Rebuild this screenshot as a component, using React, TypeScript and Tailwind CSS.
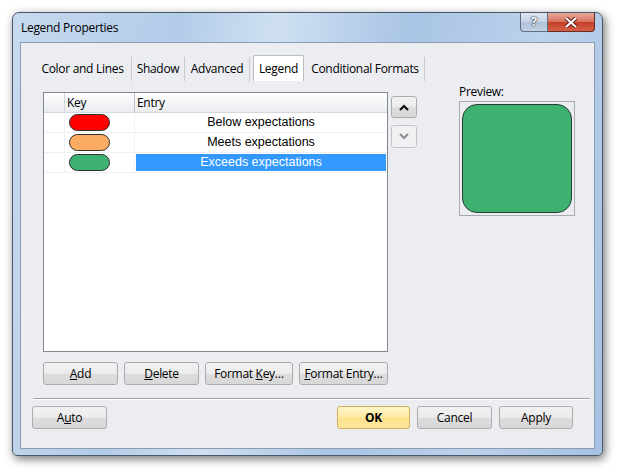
import React from "react";

type Row = {
  color: string;
  label: string;
  selected?: boolean;
};

const rows: Row[] = [
  { color: "bg-[#ff0000]", label: "Below expectations" },
  { color: "bg-[#fcab62]", label: "Meets expectations" },
  { color: "bg-[#3cb170]", label: "Exceeds expectations", selected: true },
];

function Btn({
  children,
  className = "",
  primary = false,
}: {
  children: React.ReactNode;
  className?: string;
  primary?: boolean;
}) {
  return (
    <button
      className={
        "h-[23px] rounded-[3px] border text-[12px] text-black flex items-center justify-center " +
        (primary
          ? "border-[#d2ad5a] bg-[linear-gradient(#fff6c9,#ffeaa0_50%,#fde08a_51%,#fde59c)] font-bold "
          : "border-[#a9adb2] bg-[linear-gradient(#f2f2f2,#ebebeb_50%,#dddddd_51%,#d8d8d8)] ") +
        className
      }
    >
      {children}
    </button>
  );
}

function Chevron({ up, color }: { up: boolean; color: string }) {
  return (
    <svg width="10" height="7" viewBox="0 0 10 7">
      <path
        d={up ? "M1 6 L5 2 L9 6" : "M1 1 L5 5 L9 1"}
        fill="none"
        stroke={color}
        strokeWidth="2.2"
      />
    </svg>
  );
}

export default function App() {
  const ui = "font-['Open_Sans',sans-serif] tracking-[-0.3px]";

  return (
    <div className={"w-[621px] h-[474px] bg-white overflow-hidden pt-[12px] pl-[12px] " + ui}>
      {/* window */}
      <div className="w-[591px] h-[444px] rounded-t-[7px] rounded-b-[5px] border border-[#4a5868] shadow-[2px_3px_10px_rgba(0,0,0,0.55)] bg-[linear-gradient(100deg,#c6daef_0%,#b3cce8_25%,#cfe0f2_40%,#a9c4e4_60%,#bcd2eb_80%,#a6c1e2_100%)]">
        {/* title bar */}
        <div className="h-[29px] flex items-start">
          <div className="pl-[8px] pt-[6px] text-[12px] text-black">Legend Properties</div>
          <div className="ml-auto mr-[7px] flex">
            <div className="w-[28px] h-[19px] rounded-bl-[4px] border border-t-0 border-[#5f6f83] bg-[linear-gradient(#dde6f1,#c6d3e4_50%,#b0c1d7_51%,#c3d2e5)] flex items-center justify-center text-[13px] font-bold text-[#f4f6f9] [text-shadow:0_0_1px_#3a4756,0_0_1px_#3a4756,0_0_2px_#3a4756]">
              ?
            </div>
            <div className="w-[47px] h-[19px] rounded-br-[4px] border border-l-0 border-t-0 border-[#6b2a20] bg-[linear-gradient(#e9a99a,#d8705c_50%,#c23f27_51%,#d5604a)] flex items-center justify-center">
              <svg width="14" height="11" viewBox="0 0 14 11">
                <path
                  d="M2 1 L7 5.5 L12 1 M2 10 L7 5.5 L12 10"
                  fill="none"
                  stroke="#5a1a10"
                  strokeWidth="4"
                />
                <path
                  d="M2 1 L7 5.5 L12 1 M2 10 L7 5.5 L12 10"
                  fill="none"
                  stroke="#ffffff"
                  strokeWidth="2.2"
                />
              </svg>
            </div>
          </div>
        </div>

        {/* client area */}
        <div className="ml-[7px] w-[575px] h-[407px] border border-[#8a9cb3] bg-[#ebedf1] flex flex-col text-[12px] text-black">
          {/* tabs */}
          <div className="mt-[12px] ml-[13px] flex h-[26px] items-end">
            <div className="w-[98px] h-[24px] flex items-center justify-center border-r border-[#c7cbd1]">
              Color and Lines
            </div>
            <div className="w-[53px] h-[24px] flex items-center justify-center border-r border-[#c7cbd1]">
              Shadow
            </div>
            <div className="w-[65px] h-[24px] flex items-center justify-center border-r border-[#c7cbd1]">
              Advanced
            </div>
            <div className="ml-[3px] w-[51px] h-[26px] flex items-center justify-center bg-white border border-b-0 border-[#b8bcc3] rounded-t-[2px]">
              Legend
            </div>
            <div className="ml-[2px] w-[119px] h-[24px] flex items-center justify-center border-r border-[#c7cbd1]">
              Conditional Formats
            </div>
          </div>

          {/* main */}
          <div className="flex">
            <div className="ml-[22px] flex flex-col">
              {/* list */}
              <div className="mt-[11px] w-[345px] h-[260px] border border-[#828790] bg-white flex flex-col">
                <div className="h-[20px] flex bg-[linear-gradient(#ffffff,#f4f5f7_50%,#e9ebee)] border-b border-[#d5d8dd]">
                  <div className="w-[21px] border-r border-[#d5d8dd]" />
                  <div className="w-[70px] border-r border-[#c0c4ca] pl-[2px] flex items-center">Key</div>
                  <div className="flex-1 pl-[2px] flex items-center">Entry</div>
                </div>
                {rows.map((r) => (
                  <div key={r.label} className="h-[20px] flex border-b border-[#eef0f2]">
                    <div className="w-[21px] border-r border-[#eef0f2]" />
                    <div className="w-[70px] border-r border-[#eef0f2] flex items-center pl-[4px]">
                      <div className={"w-[41px] h-[17px] rounded-full border border-[#2f2f2f] " + r.color} />
                    </div>
                    <div className="flex-1 flex p-[1px]">
                      <div
                        className={
                          "flex-1 flex items-center justify-center font-['Liberation_Sans',Arial,sans-serif] tracking-normal text-[12.5px] " +
                          (r.selected ? "bg-[#3399ff] text-white" : "text-black")
                        }
                      >
                        {r.label}
                      </div>
                    </div>
                  </div>
                ))}
              </div>

              {/* list buttons */}
              <div className="mt-[10px] flex gap-[6px]">
                <Btn className="w-[75px]">
                  <span className="underline">A</span>dd
                </Btn>
                <Btn className="w-[75px]">
                  <span className="underline">D</span>elete
                </Btn>
                <Btn className="w-[88px]">
                  Format&nbsp;<span className="underline">K</span>ey…
                </Btn>
                <Btn className="w-[89px]">
                  <span className="underline">F</span>ormat Entry…
                </Btn>
              </div>
            </div>

            {/* up / down */}
            <div className="ml-[3px] mt-[15px] flex flex-col gap-[7px]">
              <div className="w-[26px] h-[22px] rounded-[3px] border border-[#a9adb2] bg-[linear-gradient(#f2f2f2,#ebebeb_50%,#dddddd_51%,#d8d8d8)] flex items-center justify-center">
                <Chevron up color="#111111" />
              </div>
              <div className="w-[26px] h-[23px] rounded-[3px] border border-[#c2c5c9] bg-[#f0f1f3] flex items-center justify-center">
                <Chevron up={false} color="#8d8f92" />
              </div>
            </div>

            {/* preview */}
            <div className="ml-[42px] flex flex-col">
              <div className="mt-[1px] h-[19px] leading-[19px]">Preview:</div>
              <div className="w-[116px] h-[115px] border border-[#a9abae] p-[2px] flex">
                <div className="flex-1 rounded-[15px] border-[1.5px] border-[#2d3b32] bg-[#3cb170]" />
              </div>
            </div>
          </div>

          {/* separator */}
          <div className="mt-[13px] ml-[12px] w-[557px] h-[2px] border-t border-[#a0a4aa] border-b border-b-white" />

          {/* dialog buttons */}
          <div className="mt-[6px] flex">
            <Btn className="ml-[11px] w-[75px]">
              A<span className="underline">u</span>to
            </Btn>
            <Btn primary className="ml-[230px] w-[73px]">
              OK
            </Btn>
            <Btn className="ml-[7px] w-[75px]">Cancel</Btn>
            <Btn className="ml-[7px] w-[74px]">Apply</Btn>
          </div>
        </div>
      </div>
    </div>
  );
}
